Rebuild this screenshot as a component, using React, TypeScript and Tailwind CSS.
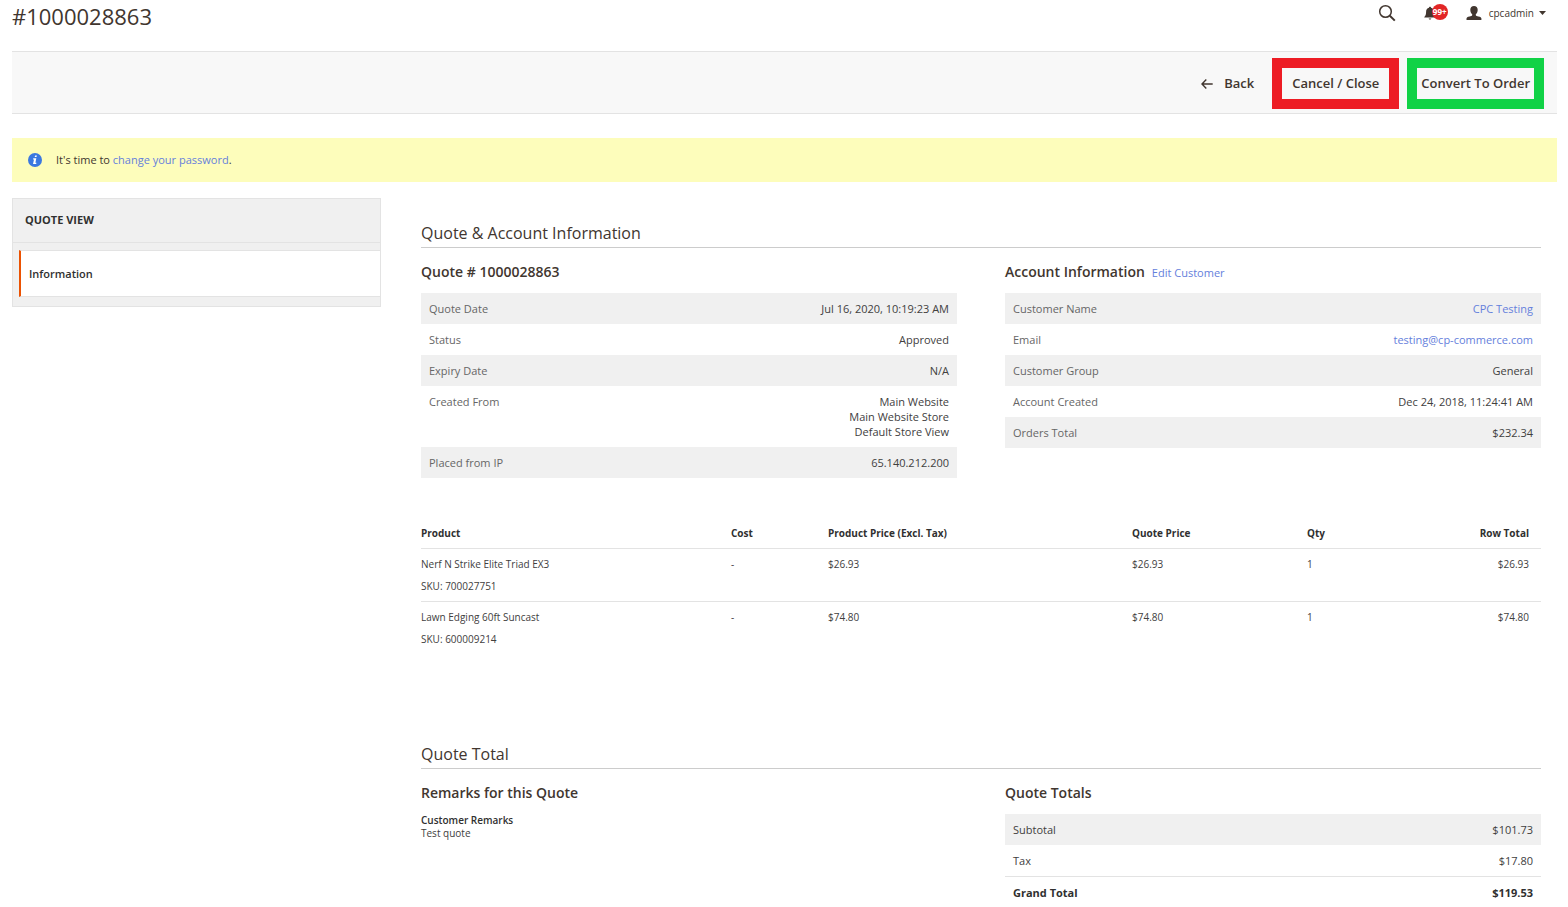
import { ReactNode } from 'react';

type InfoRow = {
  label: string;
  value: ReactNode;
};

const linkClass = 'text-[#6580dc] hover:underline';

const quoteRows: InfoRow[] = [
  { label: 'Quote Date', value: 'Jul 16, 2020, 10:19:23 AM' },
  { label: 'Status', value: 'Approved' },
  { label: 'Expiry Date', value: 'N/A' },
  {
    label: 'Created From',
    value: (
      <>
        Main Website
        <br />
        Main Website Store
        <br />
        Default Store View
      </>
    ),
  },
  { label: 'Placed from IP', value: '65.140.212.200' },
];

const accountRows: InfoRow[] = [
  { label: 'Customer Name', value: <a href="#customer" className={linkClass}>CPC Testing</a> },
  {
    label: 'Email',
    value: <a href="mailto:testing@cp-commerce.com" className={linkClass}>testing@cp-commerce.com</a>,
  },
  { label: 'Customer Group', value: 'General' },
  { label: 'Account Created', value: 'Dec 24, 2018, 11:24:41 AM' },
  { label: 'Orders Total', value: '$232.34' },
];

const items = [
  { name: 'Nerf N Strike Elite Triad EX3', sku: '700027751', cost: '-', price: '$26.93', quote: '$26.93', qty: 1, total: '$26.93' },
  { name: 'Lawn Edging 60ft Suncast', sku: '600009214', cost: '-', price: '$74.80', quote: '$74.80', qty: 1, total: '$74.80' },
];

const SearchIcon = () => (
  <svg viewBox="0 0 18 18" className="h-[18px] w-[18px]" fill="none" stroke="#41362f">
    <circle cx="7.5" cy="7.5" r="5.8" strokeWidth="1.5" />
    <path d="M11.8 11.8l5 4.8" strokeWidth="2" />
  </svg>
);

const BellIcon = () => (
  <svg viewBox="0 0 12 14" className="h-3.5 w-3" fill="#41362f">
    <path d="M6 .8c.6 0 1 .4 1 1 2 .5 2.9 2 2.9 4 0 2.6.5 4 1.8 5.2v.6H.3V11C1.6 9.8 2.1 8.4 2.1 5.8c0-2 .9-3.5 2.9-4 0-.6.4-1 1-1zM4.700 12.4h2.600c-.1.7-.6 1.100-1.300 1.100s-1.200-.4-1.300-1.100z" />
  </svg>
);

const UserIcon = () => (
  <svg viewBox="0 0 16 14" className="h-3.5 w-4" fill="#41362f">
    <path d="M8 0c2.3 0 3.700 1.500 3.700 3.700 0 1.900-.8 3.700-1.900 4.500v1c.3.600 1.200.9 2.600 1.200 2 .4 3 1 3 2.200V14H.5v-1.400c0-1.200 1-1.800 3-2.200 1.400-.3 2.400-.6 2.700-1.200v-1C5.100 7.400 4.300 5.600 4.300 3.700 4.300 1.500 5.700 0 8 0z" />
  </svg>
);

const BackIcon = () => (
  <svg viewBox="0 0 12 10" className="h-2.5 w-3" fill="none" stroke="#41362f" strokeWidth="1.4">
    <path d="M5.3.6L1 5l4.300 4.400M1 5h10.700" />
  </svg>
);

const InfoIcon = () => (
  <svg viewBox="0 0 14 14" className="h-3.5 w-3.5">
    <circle cx="7" cy="7" r="7" fill="#3b78e0" />
    <path d="M7.100 2.400h1.800l-.4 1.700H6.700zM5.300 5.200h3L7.400 9.700h1l-.2 1.200H5l1-4.500H5z" fill="#fff" />
  </svg>
);

const SectionTitle = ({ children }: { children: ReactNode }) => (
  <h2 className="border-b border-[#cccccc] pb-1 text-base leading-5 text-[#41362f]">{children}</h2>
);

const SubTitle = ({ children }: { children: ReactNode }) => (
  <h3 className="text-sm font-semibold leading-5 text-[#41362f]">{children}</h3>
);

const InfoTable = ({ rows }: { rows: InfoRow[] }) => (
  <table className="mt-[11px] w-full text-[11px] leading-[15px]">
    <tbody>
      {rows.map((row) => (
        <tr key={row.label} className="align-top odd:bg-[#f0f0f0]">
          <th scope="row" className="p-2 text-left font-normal text-[#666666]">{row.label}</th>
          <td className="p-2 text-right text-[#41403e]">{row.value}</td>
        </tr>
      ))}
    </tbody>
  </table>
);

const Header = () => (
  <header className="flex h-[51px] items-start justify-between">
    <h1 className="text-[22px] leading-8 text-[#41362f]">#1000028863</h1>
    <div className="flex h-[26px] items-center pr-[11px]">
      <button type="button" aria-label="Search" className="mr-7">
        <SearchIcon />
      </button>
      <button type="button" aria-label="Notifications" className="relative mr-[30px]">
        <BellIcon />
        <span className="absolute -top-0.5 left-2 flex h-4 w-4 items-center justify-center rounded-full bg-[#e22626] text-[8px] font-bold leading-none text-white">
          99+
        </span>
      </button>
      <button type="button" className="flex items-center text-[10px] leading-4 text-[#41362f]">
        <UserIcon />
        <span className="ml-[7px] mr-[5px]">cpcadmin</span>
        <svg viewBox="0 0 7 4" className="h-1 w-[7px]" fill="#41362f">
          <path d="M0 0h7L3.5 4z" />
        </svg>
      </button>
    </div>
  </header>
);

const Sidebar = () => (
  <aside className="w-[369px] shrink-0 border border-[#e3e3e3] bg-[#f0f0f0] pb-[9px]">
    <div className="border-b border-[#e3e3e3] px-3 pb-[15px] pt-[13px] text-[11px] font-bold leading-[15px] text-[#303030]">
      QUOTE VIEW
    </div>
    <nav className="pl-1.5 pt-[7px]">
      <a
        href="#information"
        className="block border-y border-l-2 border-y-[#e3e3e3] border-l-[#eb5202] bg-white px-2 py-[15px] text-[11px] font-semibold leading-[15px] text-[#303030]">
        Information
      </a>
    </nav>
  </aside>
);

const ItemsTable = () => (
  <table className="mt-[46px] w-full table-fixed text-left text-[10px] leading-[14px] text-[#41403e]">
    <colgroup>
      <col className="w-[310px]" />
      <col className="w-[97px]" />
      <col className="w-[304px]" />
      <col className="w-[175px]" />
      <col className="w-20" />
      <col />
    </colgroup>
    <thead>
      <tr className="border-b border-[#e3e3e3] text-[#303030]">
        <th scope="col" className="pb-2 pt-0.5">Product</th>
        <th scope="col" className="pb-2 pt-0.5">Cost</th>
        <th scope="col" className="pb-2 pt-0.5">Product Price (Excl. Tax)</th>
        <th scope="col" className="pb-2 pt-0.5">Quote Price</th>
        <th scope="col" className="pb-2 pt-0.5">Qty</th>
        <th scope="col" className="pb-2 pr-3 pt-0.5 text-right">Row Total</th>
      </tr>
    </thead>
    <tbody>
      {items.map((item) => (
        <tr key={item.sku} className="border-b border-[#e3e3e3] align-top last:border-b-0">
          <td className="py-2">
            <div>{item.name}</div>
            <div className="mt-2">SKU: {item.sku}</div>
          </td>
          <td className="py-2">{item.cost}</td>
          <td className="py-2">{item.price}</td>
          <td className="py-2">{item.quote}</td>
          <td className="py-2">{item.qty}</td>
          <td className="py-2 pr-3 text-right">{item.total}</td>
        </tr>
      ))}
    </tbody>
  </table>
);

const App = () => {
  return (
    <div className="bg-white pl-3 pr-[11px] font-['Open_Sans',sans-serif]">
      <Header />

      <div className="flex items-center justify-end border-y border-[#e3e3e3] bg-[#f8f8f8] pb-1 pr-[13px] pt-1.5 text-[13px] font-semibold text-[#41362f]">
        <button type="button" className="mr-[18px] flex items-center gap-[11px]">
          <BackIcon />
          Back
        </button>
        <button type="button" className="mr-2 h-[51px] border-10 border-[#ed1c24] px-2.5">
          Cancel / Close
        </button>
        <button type="button" className="h-[51px] border-10 border-[#11d246] px-1">
          Convert To Order
        </button>
      </div>

      <div className="mt-6 flex items-center gap-3.5 bg-[#fdfdbb] px-4 py-3.5 text-[11px] leading-4 text-[#41362f]">
        <InfoIcon />
        <p>
          It's time to <a href="#password" className={linkClass}>change your password</a>.
        </p>
      </div>

      <div className="mt-4 flex items-start gap-10 pr-4">
        <Sidebar />

        <main className="min-w-0 flex-1 pt-[25px]">
          <section>
            <SectionTitle>Quote &amp; Account Information</SectionTitle>
            <div className="mt-3.5 grid grid-cols-2 gap-12">
              <div>
                <SubTitle>Quote # 1000028863</SubTitle>
                <InfoTable rows={quoteRows} />
              </div>
              <div>
                <div className="flex items-baseline gap-[7px]">
                  <SubTitle>Account Information</SubTitle>
                  <a href="#edit-customer" className="text-[11px] leading-[15px] text-[#6580dc] hover:underline">
                    Edit Customer
                  </a>
                </div>
                <InfoTable rows={accountRows} />
              </div>
            </div>
          </section>

          <ItemsTable />

          <section className="mt-[90px]">
            <SectionTitle>Quote Total</SectionTitle>
            <div className="mt-3.5 grid grid-cols-2 gap-12">
              <div>
                <SubTitle>Remarks for this Quote</SubTitle>
                <div className="mt-[11px] text-[10px] leading-[13px] text-[#41403e]">
                  <div className="font-semibold text-[#303030]">Customer Remarks</div>
                  <p>Test quote</p>
                </div>
              </div>
              <div>
                <SubTitle>Quote Totals</SubTitle>
                <table className="mt-[11px] w-full text-[11px] leading-[15px] text-[#41403e]">
                  <tbody>
                    <tr className="bg-[#f0f0f0]">
                      <th scope="row" className="p-2 text-left font-normal">Subtotal</th>
                      <td className="p-2 text-right">$101.73</td>
                    </tr>
                    <tr>
                      <th scope="row" className="p-2 text-left font-normal">Tax</th>
                      <td className="p-2 text-right">$17.80</td>
                    </tr>
                  </tbody>
                  <tfoot>
                    <tr className="border-t border-[#e3e3e3] font-bold text-[#303030]">
                      <th scope="row" className="px-2 pt-2 text-left">Grand Total</th>
                      <td className="px-2 pt-2 text-right">$119.53</td>
                    </tr>
                  </tfoot>
                </table>
              </div>
            </div>
          </section>
        </main>
      </div>
    </div>
  );
};

export default App;
